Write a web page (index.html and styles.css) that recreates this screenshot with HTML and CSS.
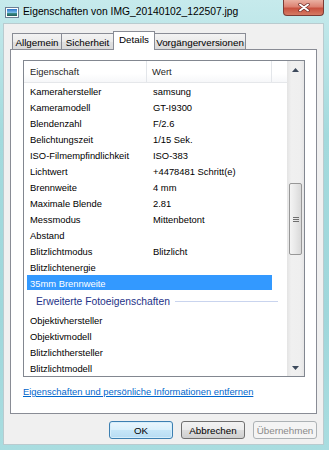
FILE: index.html
```html
<!DOCTYPE html>
<html lang="de">

<head>
    <meta charset="UTF-8">
    <meta name="viewport" content="width=device-width, initial-scale=1.0">
    <title>Eigenschaften von IMG_20140102_122507.jpg</title>
    <link rel="stylesheet" href="styles.css">
</head>

<body>
    <div class="window">
        <!-- Titelleiste -->
        <div class="titlebar">
            <svg class="app-icon" width="14" height="11" viewBox="0 0 14 11">
                <defs>
                    <linearGradient id="sky" x1="0" y1="0" x2="0" y2="1">
                        <stop offset="0" stop-color="#2b73c9" />
                        <stop offset="0.55" stop-color="#7cc0ea" />
                        <stop offset="0.6" stop-color="#3f8f8a" />
                        <stop offset="1" stop-color="#1f5f5a" />
                    </linearGradient>
                </defs>
                <rect x="0.5" y="0.5" width="13" height="10" fill="#fff" stroke="#6d7f93" />
                <rect x="2" y="2" width="10" height="7" fill="url(#sky)" />
            </svg>
            <span class="title">Eigenschaften von IMG_20140102_122507.jpg</span>
            <button class="close" type="button">
                <svg width="12" height="9" viewBox="0 0 12 9">
                    <path d="M2 1.5 L10 7.5 M10 1.5 L2 7.5" stroke="#6b2a25" stroke-width="3.4" stroke-linecap="round" />
                    <path d="M2 1.5 L10 7.5 M10 1.5 L2 7.5" stroke="#fff" stroke-width="2" stroke-linecap="round" />
                </svg>
            </button>
        </div>

        <div class="client">
            <ul class="tabs">
                <li class="t1">Allgemein</li>
                <li class="t2">Sicherheit</li>
                <li class="t3 on">Details</li>
                <li class="t4">Vorgängerversionen</li>
            </ul>

            <div class="panel">
                <div class="listview">
                    <div class="lv-main">
                        <div class="lv-head">
                            <span class="h1">Eigenschaft</span>
                            <span class="h2">Wert</span>
                            <span class="h3"></span>
                        </div>
                        <div class="lv-body">
                            <div class="row"><span class="c1">Kamerahersteller</span><span class="c2">samsung</span></div>
                            <div class="row"><span class="c1">Kameramodell</span><span class="c2">GT-I9300</span></div>
                            <div class="row"><span class="c1">Blendenzahl</span><span class="c2">F/2.6</span></div>
                            <div class="row"><span class="c1">Belichtungszeit</span><span class="c2">1/15 Sek.</span></div>
                            <div class="row"><span class="c1">ISO-Filmempfindlichkeit</span><span class="c2">ISO-383</span></div>
                            <div class="row"><span class="c1">Lichtwert</span><span class="c2">+4478481 Schritt(e)</span></div>
                            <div class="row"><span class="c1">Brennweite</span><span class="c2">4 mm</span></div>
                            <div class="row"><span class="c1">Maximale Blende</span><span class="c2">2.81</span></div>
                            <div class="row"><span class="c1">Messmodus</span><span class="c2">Mittenbetont</span></div>
                            <div class="row"><span class="c1">Abstand</span><span class="c2"></span></div>
                            <div class="row"><span class="c1">Blitzlichtmodus</span><span class="c2">Blitzlicht</span></div>
                            <div class="row"><span class="c1">Blitzlichtenergie</span><span class="c2"></span></div>
                            <div class="row sel"><span class="c1">35mm Brennweite</span><span class="c2"></span></div>
                            <div class="group"><span>Erweiterte Fotoeigenschaften</span><i></i></div>
                            <div class="row"><span class="c1">Objektivhersteller</span><span class="c2"></span></div>
                            <div class="row"><span class="c1">Objektivmodell</span><span class="c2"></span></div>
                            <div class="row"><span class="c1">Blitzlichthersteller</span><span class="c2"></span></div>
                            <div class="row"><span class="c1">Blitzlichtmodell</span><span class="c2"></span></div>
                        </div>
                    </div>

                    <!-- Bildlaufleiste -->
                    <div class="scrollbar">
                        <div class="sb-btn">
                            <svg width="7" height="4" viewBox="0 0 7 4"><path d="M0 4 L3.5 0 L7 4 Z" fill="#3d4a5c" /></svg>
                        </div>
                        <div class="thumb">
                            <svg width="6" height="5" viewBox="0 0 6 5">
                                <path d="M0 0.5 H6 M0 2.5 H6 M0 4.5 H6" stroke="#6f6f6f" stroke-width="1" />
                            </svg>
                        </div>
                        <div class="sb-space"></div>
                        <div class="sb-btn">
                            <svg width="7" height="4" viewBox="0 0 7 4"><path d="M0 0 L7 0 L3.5 4 Z" fill="#3d4a5c" /></svg>
                        </div>
                    </div>
                </div>

                <a class="remove-link" href="#">Eigenschaften und persönliche Informationen entfernen</a>
            </div>

            <div class="buttons">
                <button type="button" class="btn default">OK</button>
                <button type="button" class="btn">Abbrechen</button>
                <button type="button" class="btn" disabled>Übernehmen</button>
            </div>
        </div>
    </div>
</body>

</html>
```

FILE: styles.css
```css
* {
    margin: 0;
    padding: 0;
    box-sizing: border-box;
    list-style: none;
}

body {
    font-family: "Liberation Sans", Arial, sans-serif;
    font-size: 9.4px;
    color: #000;
    background: #a6dbdf;
}

.window {
    width: 329px;
    height: 450px;
    display: flex;
    flex-direction: column;
    background: linear-gradient(#c6eaec, #a3dadd 30%, #9fd7db 70%, #a9dde0);
}

/* Titelleiste */
.titlebar {
    height: 23px;
    flex-shrink: 0;
    display: flex;
    align-items: center;
    padding-left: 5px;
}

.app-icon {
    margin-right: 4px;
    margin-top: 2px;
}

.title {
    font-size: 10.3px;
    color: #000;
}

.close {
    margin-left: auto;
    margin-right: 5px;
    align-self: flex-start;
    width: 41px;
    height: 16px;
    border: 1px solid #7b3b35;
    border-top: 0;
    border-radius: 0 0 4px 4px;
    background: linear-gradient(#eab0a2, #dc8272 45%, #c8513f 55%, #d57b64);
    display: flex;
    align-items: center;
    justify-content: center;
}

/* Fensterinhalt */
.client {
    height: 422px;
    margin: 0 5px 0 3px;
    border: 1px solid #b9cbcf;
    background: #f0f0f0;
    display: flex;
    flex-direction: column;
    padding: 7px 6px 0 6px;
}

.tabs {
    display: flex;
    align-items: flex-end;
    height: 18px;
    padding-left: 2px;
    position: relative;
    z-index: 1;
}

.tabs li {
    height: 16px;
    margin-right: -1px;
    border: 1px solid #898c95;
    border-bottom: 0;
    background: linear-gradient(#f3f3f3, #ebebeb 50%, #e0e0e0 50%, #dadada);
    text-align: center;
    line-height: 15px;
    padding-top: 1px;
    font-size: 9.8px;
}

.tabs .t1 { width: 50px; }
.tabs .t2 { width: 53px; }
.tabs .t3 { width: 42px; }
.tabs .t4 { width: 92px; }

.tabs li.on {
    height: 19px;
    margin-bottom: -1px;
    background: #fff;
    line-height: 16px;
    padding-top: 0;
    position: relative;
    z-index: 2;
}

.panel {
    height: 365px;
    background: #fff;
    border: 1px solid #898c95;
    padding: 10px 11px 0 12px;
}

/* Listenansicht */
.listview {
    height: 317px;
    border: 1px solid #828790;
    display: flex;
}

.lv-main {
    flex: 1;
    overflow: hidden;
    display: flex;
    flex-direction: column;
}

.lv-head {
    height: 22px;
    flex-shrink: 0;
    display: flex;
    background: linear-gradient(#fff, #fff 60%, #f6f7f9);
    border-bottom: 1px solid #e5e7ea;
    color: #1e1e1e;
}

.lv-head span {
    display: flex;
    align-items: center;
    border-right: 1px solid #e3e6ea;
}

.lv-head .h1 {
    width: 123px;
    padding-left: 6px;
}

.lv-head .h2 {
    width: 125px;
    padding-left: 5px;
}

.lv-head .h3 {
    flex: 1;
    border-right: 0;
}

.lv-body {
    flex: 1;
    overflow: hidden;
    padding-left: 3px;
}

.row {
    display: flex;
    align-items: center;
    width: 245px;
    height: 16px;
    white-space: nowrap;
}

.row .c1 {
    width: 120px;
    padding-left: 3px;
}

.row .c2 {
    padding-left: 6px;
}

.row.sel {
    background: linear-gradient(#3399ff, #3399ff) no-repeat 0 0 / 100% 15px;
    color: #fff;
}

.group {
    display: flex;
    align-items: center;
    width: 251px;
    height: 21px;
    padding-left: 9px;
    color: #1e3287;
    font-size: 10.3px;
}

.group i {
    flex: 1;
    height: 1px;
    margin-left: 5px;
    background: #c9d4ee;
}

/* Bildlaufleiste */
.scrollbar {
    width: 17px;
    display: flex;
    flex-direction: column;
    background: linear-gradient(90deg, #e4e4e4, #f0f0f0 25%, #efefef 75%, #e6e6e6);
}

.sb-btn {
    height: 17px;
    flex-shrink: 0;
    display: flex;
    align-items: center;
    justify-content: center;
}

.thumb {
    height: 72px;
    margin: 105px 2px 0 2px;
    border: 1px solid #979797;
    border-radius: 2px;
    background: linear-gradient(90deg, #f4f4f4, #e8e8e8 50%, #d9d9d9);
    display: flex;
    align-items: center;
    justify-content: center;
}

.sb-space {
    flex: 1;
}

.remove-link {
    display: inline-block;
    margin-top: 9px;
    line-height: 12px;
    color: #0066cc;
}

/* Schaltflächen */
.buttons {
    display: flex;
    justify-content: flex-end;
    gap: 8px;
    margin-top: 7px;
}

.btn {
    width: 64px;
    height: 18px;
    border: 1px solid #707070;
    border-radius: 3px;
    background: linear-gradient(#f2f2f2, #ebebeb 50%, #dddddd 50%, #cfcfcf);
    font-family: inherit;
    font-size: 9.8px;
    color: #000;
}

.btn.default {
    border-color: #3c7fb1;
    background: linear-gradient(#eaf6fd, #d9f0fc 50%, #c6e6f8 50%, #b7dcf3);
    box-shadow: inset 0 0 0 1px #d6eefb;
}

.btn:disabled {
    border-color: #adb2b5;
    background: #f4f4f4;
    color: #8a8a8a;
}
```
